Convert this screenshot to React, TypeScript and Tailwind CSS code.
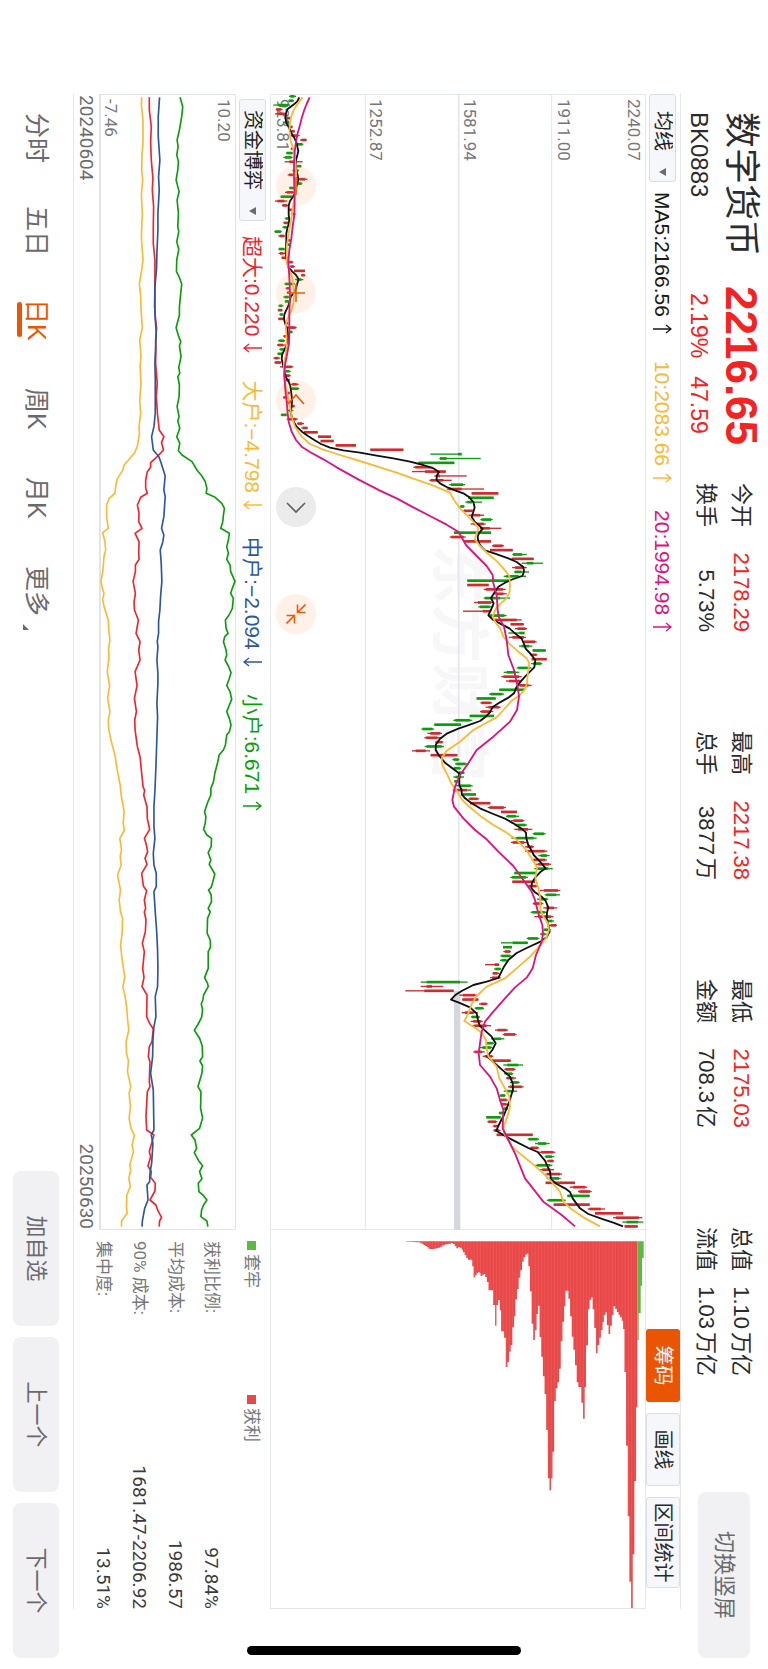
import React from "react";

/* ------------------------------------------------------------------ */
/* Chart data                                                          */
/* ------------------------------------------------------------------ */

type Segment = { t: number; v: number; pts: string };

const MAIN_W = 3408;
const MAIN_H = 1128;
const FLOW_W = 3408;
const FLOW_H = 411;

// Candles as "colour low high", one per trading day; v is the price offset of the block.
const CANDLES: { v: number; rows: string }[] = [
  {
    v: -30,
    rows:
      "G87 108,G85 102,G40 90,R47 68,R45 78,R78 92,G70 92,R90 98,R92 105,R92 119,R120 141,G108 130,R92 100,G78 100,G70 98,R74 128,G108 125,G97 117,R83 103,R107 142," +
      "G108 127,G87 105,R75 102,G62 97,R45 82,R66 84,R86 97,G92 107,G74 90,R70 87,G67 84,G43 65,R55 75,R78 93,G80 92,G55 75,R56 75,R64 84,R78 100,R90 105," +
      "R102 135,R123 136,G105 130,G73 105,R77 90,R80 95,G70 88,G74 88,G55 70,R53 68,G58 70,R54 75,R75 85,R82 110,G86 99,R70 85,G54 75,R51 75,G58 75,G52 68," +
      "R40 60,R43 65,R60 100,G76 92,R70 92,R76 90,R92 116,G93 118,R80 90,R69 85,R80 95,R92 105,G84 100,G62 82,R80 113,R111 132,R124 144,R132 173,R174 213,R182 221," +
      "R227 288,R331 430",
  },
  {
    v: 330,
    rows:
      "G151 245,G178 302,G115 223,R100 158,R96 198,R163 260,R148 215,G208 255,R200 312,R275 355,G265 341,G256 306,G238 254,R248 282,R265 312,G301 338,R272 317,R300 364,G222 333,R209 257," +
      "R253 333,R336 372,R330 398,G397 440,R395 461,G425 489,R396 440,G402 447,G371 438,G262 390,R262 326,R311 377,R340 380,G311 390,R282 340,G295 340,R249 330,G325 380,R340 425,R392 431," +
      "R405 441,G385 432,R387 438,R428 470,G417 457,G458 497,R450 472,R455 500,G453 487,G410 455,G371 418,R364 425,R378 425,R415 455,G358 435,G327 372,G290 347,R301 336,R317 362,R300 340," +
      "G269 342,G220 277,G163 243,G124 162,R142 186,R133 185,R165 190,G134 192,R96 150,R152 232,G217 238,G225 267,G217 243,G235 254,G220 252,G222 235,G228 278,R218 274,G243 288,R265 297," +
      "R270 331,R323 378,R363 411,G378 417,R393 433,G403 441,R403 457,G458 497,G394 470,R393 445,R435 462,R435 502,G475 509,R455 501,R465 513,G463 518,G403 470,G391 444,R397 465,R443 473," +
      "R480 541,G494 540,G471 505,R458 490,R490 532,G452 500,R463 520,G500 522,R507 531,G490 512,G480 500,G440 478,G363 444,G369 396,R370 393,G361 395,G360 385,R315 358,G342 364,R337 358," +
      "R330 362,G122 263,R122 190,R76 221,R238 291,R247 295,R297 323,G284 312,R245 293,G273 300,R272 308,R277 333,R345 384,R368 410,G333 373,G317 342,G300 337,R280 314,R308 340,R335 392," +
      "G370 429,R373 407,G372 400,R378 408,G390 419,R384 431,G371 411,G359 377,R357 383,R362 385,G368 384,G356 375,G319 362,R322 352,R338 357,R340 362,R350 458,G443 477,G465 509,R450 477," +
      "R473 526,G494 523,R500 522,G466 517,R478 522,R496 546,G500 542,R497 585,R569 622,R594 635,G562 629,G500 557,R521 629,R623 675,R645 729,R699 787,G727 790,R734 773",
  },
];

// Candles whose wicks are long compared with their bodies: index -> [body from, body to].
const BODIES: Record<number, [number, number]> = {
  2: [55, 85], 15: [88, 110], 19: [118, 135], 82: [234, 245], 83: [180, 200], 86: [135, 197], 87: [168, 180],
  88: [152, 190], 90: [205, 245], 93: [262, 276], 99: [300, 330], 105: [399, 426], 107: [440, 460],
  109: [405, 425], 110: [378, 415], 115: [315, 360], 118: [308, 329], 120: [343, 410], 123: [418, 434],
  194: [398, 443], 199: [344, 357], 203: [140, 240], 204: [140, 156], 205: [133, 221],
};

const FULL_BODY = new Set([
  84, 91, 92, 100, 102, 104, 106, 111, 112, 121, 127, 129, 136, 138, 142, 144, 151, 160, 162, 164, 178, 180, 195,
  207, 221, 234, 238, 249, 252, 254, 256, 259, 78, 79, 80, 81, 77, 23, 40,
]);

const MA5: Segment[] = [
  {
    t: -42,
    v: -30,
    pts: "118,52 112,64 103,72 92,80 82,88 78,100 76,115 80,130 86,141 92,153 97,165 104,175 109,187 112,200 115,213 112,226 108,240 107,255 109,272 113,285 115,298 112,312 108,325 106,338 98,352 90,363 86,377 86,404 88,418 86,432 82,445 79,460 79,480 78,500 77,520 79,535 82,548 85,562 97,575 108,585 116,598 112,610 108,625 101,640 92,650 89,665 84,680 78,692 73,704 72,718 76,732 81,743 83,757 85,770 83,782 79,796 74,808 67,822 65,836 68,850 71,862 74,878 78,892 86,905 91,918 93,932 95,948 96,965 95,980 92,995 95,1010 101,1025 110,1040 126,1055 144,1068 163,1080 183,1092 210,1103 250,1111 300,1118 350,1127 400,1135 450,1145 490,1155 520,1165",
  },
  {
    t: 1008,
    v: 330,
    pts: "177,126 170,138 170,150 180,160 200,171 225,181 250,190 268,202 280,216 284,232 280,246 275,260 284,275 298,287 308,297 298,308 293,320 295,335 302,348 315,361 345,371 385,385 410,396 430,411 432,425 427,438 400,447 375,458 355,470 342,490 333,504 341,520 334,537 325,556 340,570 365,583 388,595 405,610 425,626 432,642 437,656 452,672 466,690 463,712 450,725 435,740 420,757 409,772 402,790 385,803 360,817 337,832 330,847 315,862 300,873 270,884 235,896 200,911 180,926 168,943 167,960 178,978 197,1000 220,1017 237,1030 238,1050 238,1066 245,1080 245,1092 255,1105",
  },
  {
    t: 2118,
    v: 330,
    pts: "275,10 300,25 340,42 375,56 400,70 425,86 438,98 439,115 444,133 455,152 461,165 480,185 497,205 480,217 466,232 456,248 454,264 463,275 485,290 497,303 505,322 501,338 500,355 505,375 509,395 500,412 483,424 440,444 410,459 385,480 372,500 363,518 355,534 320,545 280,555 245,573 225,586 213,599 235,607 270,622 290,640 294,660 299,677 315,692 335,710 347,730 337,750 321,770 340,786 365,808 390,830 398,850 399,868 394,885 388,905 380,925 372,945 364,960 355,978 349,992 370,1005 400,1021 445,1044 473,1056 495,1082 503,1100 510,1115 513,1138 530,1152 555,1165 570,1176 578,1195 600,1225 625,1242 670,1258 700,1268 729,1279",
  },
];

const MA10: Segment[] = [
  {
    t: -42,
    v: -30,
    pts: "128,52 118,65 107,80 99,95 93,112 90,130 88,150 90,170 94,190 99,205 104,225 106,245 108,270 109,300 108,330 106,345 102,365 98,385 96,405 92,425 88,450 84,475 80,500 80,530 81,550 88,570 96,590 100,615 102,640 101,665 95,690 87,708 80,722 77,740 79,760 80,785 79,805 76,830 72,850 72,880 74,905 79,930 85,955 90,980 95,1010 105,1040 125,1070 150,1092 190,1109 240,1125 290,1140",
  },
  {
    t: 1008,
    v: 330,
    pts: "0,112 50,128 100,146 160,167 210,188 222,210 240,235 262,257 285,280 295,295 288,315 285,328 300,348 325,372 352,395 370,415 388,438 390,465 389,485 380,505 362,520 348,535 338,560 345,575 360,595 370,620 387,640 415,665 440,685 448,700 444,725 441,760 435,778 420,795 395,812 370,840 350,862 320,878 280,900 240,935 200,962 185,985 187,1005 200,1030 215,1062 230,1082",
  },
  {
    t: 2118,
    v: 330,
    pts: "247,0 265,18 300,47 340,75 380,98 410,120 437,148 455,175 471,203 466,235 474,260 480,290 482,330 490,350 503,368 507,390 500,412 478,440 450,470 410,505 375,535 320,560 290,588 275,612 265,640 253,663 285,683 305,698 318,720 320,745 325,770 350,800 358,835 375,865 388,890 390,920 382,950 371,980 372,1000 400,1045 450,1085 490,1120 510,1140 540,1175 550,1205 575,1228 610,1252 660,1279",
  },
];

const MA20: Segment[] = [
  {
    t: -42,
    v: -30,
    pts: "149,52 140,72 132,92 125,115 120,135 113,160 108,185 104,215 102,250 102,290 103,330 104,370 103,405 98,440 94,475 88,510 85,545 87,575 89,610 90,650 88,700 88,760 87,790 80,830 75,855 73,885 76,930 80,965 83,1000 86,1025 95,1055 108,1080 125,1100 150,1116 190,1138 230,1162 296,1199",
  },
  {
    t: 1008,
    v: 330,
    pts: "0,182 50,205 100,232 150,258 200,284 235,305 258,345 290,378 320,408 338,435 340,460 350,495 353,540 356,560 372,590 380,630 385,675 402,720 413,770 417,800 411,840 390,875 340,920 290,960 265,1000 240,1035 225,1070",
  },
  {
    t: 2118,
    v: 330,
    pts: "217,0 222,20 250,55 285,90 320,118 355,155 400,198 430,240 455,275 465,300 475,340 487,375 489,400 485,425 468,465 458,505 440,533 405,562 375,595 340,635 315,665 305,695 300,730 296,760 300,795 330,830 350,865 360,900 370,930 368,985 385,1020 405,1060 435,1135 490,1205 545,1245 585,1279",
  },
];

const FLOW_SMALL: Segment[] = [
  {
    t: -42,
    v: -297,
    pts: "539,52 547,80 544,110 537,150 530,180 533,200 529,225 534,245 532,270 527,300 536,335 530,360 534,400 532,440 535,455 529,485 535,508 529,540 528,575 536,590 544,612 541,640 537,680 537,705 527,743 535,770 541,785 537,797 542,830 535,862 538,880 532,890 537,915 536,950 530,980 536,1010 532,1022 538,1045 529,1070 538,1090 534,1112 545,1125 575,1145 590,1170 605,1188 615,1205 620,1225 618,1240 645,1252 665,1270 673,1285 670,1305 668,1325 662,1345 688,1360 685,1380 680,1400 685,1420 680,1438 690,1455 692,1475",
  },
  {
    t: 1398,
    v: -87,
    pts: "495,64 488,82 482,100 490,115 487,145 477,165 466,180 468,205 474,220 464,230 460,245 468,270 470,285 465,300 475,318 483,338 477,358 470,377 480,395 485,418 478,435 470,455 478,475 483,495 478,515 470,525 466,555 460,570 447,585 442,610 434,640 430,665 422,685 422,705 412,728 403,755 407,770 405,790 400,808 410,825 424,835 423,860 414,878 422,900 417,913 427,930 434,942 428,965 423,982 415,990 423,1005 424,1025 414,1045",
  },
  {
    t: 2388,
    v: -87,
    pts: "420,66 412,85 411,130 420,150 421,172 414,185 414,235 403,263 412,280 414,290 400,315 398,330 393,342 397,358 394,382 382,405 372,421 388,445 396,468 397,500 389,513 397,528 395,550 389,570 383,590 392,605 391,655 397,684 388,715 363,735 374,750 379,775 372,788 385,812 397,827 388,845 395,866 384,880 386,905 400,917 410,930 400,945 394,960 392,980 410,993 413,1010",
  },
];

const FLOW_LARGE: Segment[] = [
  {
    t: -42,
    v: -297,
    pts: "423,52 422,75 427,120 427,185 424,225 423,270 426,300 422,345 425,400 422,470 424,500 427,540 423,570 416,612 420,650 421,690 425,743 417,780 421,830 418,860 421,910 417,960 420,1000 415,1040 416,1060 411,1095 402,1118 385,1138 370,1155 365,1172 350,1195 345,1215 342,1240 325,1255 317,1275 317,1310 322,1345 305,1358 312,1385 314,1410 309,1430 306,1470",
  },
  {
    t: 1398,
    v: -87,
    pts: "90,64 94,85 99,100 95,118 100,142 112,180 114,215 117,240 113,265 114,295 109,335 116,377 110,415 117,455 112,480 113,505 120,540 132,585 140,635 148,675 151,705 160,755 157,790 161,810 147,835 152,870 148,890 151,915 140,945 145,970 149,990 145,1020",
  },
  {
    t: 2388,
    v: -87,
    pts: "149,66 155,85 154,130 149,165 154,210 162,262 156,290 163,320 168,355 170,385 174,420 166,455 167,490 173,513 170,545 180,590 175,610 179,650 175,685 181,715 191,737 184,765 188,785 177,825 180,840 174,865 179,890 168,915 167,950 169,970 152,993 152,1010",
  },
];

const FLOW_HUGE: Segment[] = [
  {
    t: -42,
    v: -297,
    pts: "446,52 446,90 452,140 450,185 452,240 457,295 455,330 459,380 458,440 458,490 463,540 463,600 462,680 465,720 468,745 465,780 466,800 465,850 470,910 467,950 471,1005 476,1050 490,1070 483,1088 489,1110 470,1130 450,1148 450,1162 440,1175 435,1200 435,1225 440,1240 420,1252 410,1275 415,1300 414,1325 424,1345 403,1360 415,1385 414,1415 415,1438 404,1455 404,1475",
  },
  {
    t: 1398,
    v: -87,
    pts: "187,64 194,100 190,125 191,150 203,180 196,220 208,245 204,270 208,300 193,335 199,377 191,415 197,455 192,480 193,510 200,560 208,590 212,630 217,680 222,692 219,705 229,740 230,775 237,808 221,835 226,850 231,875 223,895 229,913 213,940 218,978 228,992 221,1020 225,1045",
  },
  {
    t: 2388,
    v: -87,
    pts: "221,66 226,90 224,125 215,160 221,185 216,235 220,262 214,290 229,315 228,380 237,400 248,417 244,455 236,470 233,500 238,515 236,575 238,590 230,605 226,680 228,720 250,735 240,770 236,785 240,800 232,828 242,845 240,862 254,880 253,903 238,930 256,945 262,962 273,982 267,993 266,1010",
  },
];

const FLOW_MEDIUM: Segment[] = [
  {
    t: -42,
    v: -297,
    pts: "477,52 473,110 473,170 478,240 474,290 476,330 472,400 472,450 469,520 468,565 463,620 463,700 467,760 465,800 463,850 464,900 464,1000 460,1040 453,1070 458,1110 475,1130 482,1150 494,1188 490,1230 494,1250 490,1310 483,1345 490,1365 487,1385 479,1410 482,1450",
  },
  {
    t: 1398,
    v: -87,
    pts: "274,64 270,110 268,150 264,185 264,220 260,245 262,260 259,300 262,340 262,370 259,430 261,470 258,560 256,620 253,692 250,740 250,800 253,835 248,880 250,915 257,940 257,980 250,995 253,1040",
  },
  {
    t: 2388,
    v: -87,
    pts: "254,66 258,120 261,180 262,235 261,290 254,320 256,380 250,410 247,450 246,500 240,550 248,600 250,720 242,735 247,760 243,820 238,850 237,875 229,885 232,930 222,955 215,993 214,1010",
  },
];

// Chip distribution as "price,amount" steps; each amount holds until the next price.
const CHIPS =
  "78,1 95,2 105,3 118,4 124,7 130,11 135,14 140,18 145,22 150,23 162,22 168,21 174,19 180,16 187,12 195,9 205,7 213,5 219,8 224,14 229,21 234,17 240,19 245,25 249,33 254,42 259,50 264,55 275,55 277,75 281,108 286,101 290,95 295,92 299,95 302,104 307,100 312,98 316,107 321,122 326,147 340,191 346,253 350,191 355,176 360,207 364,270 373,289 378,377 383,362 388,331 393,311 398,258 403,225 407,174 412,143 417,109 422,87 427,61 432,48 437,40 441,37 446,75 451,150 456,247 461,296 466,267 471,218 475,193 480,287 485,346 490,405 495,458 500,566 505,711 510,747 515,711 519,631 524,479 529,441 534,423 539,382 544,300 549,241 554,195 558,148 567,172 572,225 577,286 582,325 587,372 592,423 597,437 606,484 611,532 616,437 620,312 626,204 631,175 636,168 640,204 645,260 650,335 655,311 660,289 665,266 670,243 674,221 679,213 683,251 688,278 693,253 698,221 703,195 708,202 713,212 718,220 723,228 728,238 732,263 736,392 741,613 746,825 751,1021 756,1100 761,939 766,719 771,498 775,498";
const CHIPS_HELD = "775,297 779,215 785,133 789,50 794,50";

const linePoints = (segments: Segment[], height: number) =>
  segments
    .flatMap(({ t, v, pts }) =>
      pts.split(" ").map((pair) => {
        const [value, time] = pair.split(",").map(Number);
        return `${time + t},${height - (value + v)}`;
      }),
    )
    .join(" ");

const stepPath = (steps: string) => {
  const points = steps.split(" ").map((pair) => pair.split(",").map(Number));
  const y = (price: number) => MAIN_H - (price + 330);
  let d = `M34 ${y(points[0][0])}`;
  points.forEach(([price, amount], i) => {
    const next = points[i + 1] ? points[i + 1][0] : price;
    d += `L${34 + amount} ${y(price)}L${34 + amount} ${y(next)}`;
  });
  return `${d}L34 ${y(points[points.length - 1][0])}Z`;
};

const candles = CANDLES.flatMap(({ v, rows }) =>
  rows.split(",").map((row) => {
    const [low, high] = row.slice(1).split(" ").map(Number);
    return { up: row[0] === "R", low, high, v };
  }),
).map((c, i) => {
  const span = c.high - c.low;
  const trimLow = FULL_BODY.has(i) ? 0 : span * (i % 2 ? 0.1 : 0.2);
  const trimHigh = FULL_BODY.has(i) ? 0 : span * (i % 3 ? 0.12 : 0.24);
  const [from, to] = BODIES[i] ?? [c.low + trimLow, c.high - trimHigh];
  return { up: c.up, x: 7 + i * 13.09, low: c.low + c.v, high: c.high + c.v, from: from + c.v, to: to + c.v };
});

/* ------------------------------------------------------------------ */
/* Pieces                                                              */
/* ------------------------------------------------------------------ */

type Stat = { label: string; value: string; unit?: string; red?: boolean };

const STATS: Stat[][] = [
  [{ label: "今开", value: "2178.29", red: true }, { label: "换手", value: "5.73%" }],
  [{ label: "最高", value: "2217.38", red: true }, { label: "总手", value: "3877", unit: "万" }],
  [{ label: "最低", value: "2175.03", red: true }, { label: "金额", value: "708.3", unit: "亿" }],
  [{ label: "总值", value: "1.10", unit: "万亿" }, { label: "流值", value: "1.03", unit: "万亿" }],
];

function Header() {
  return (
    <header className="flex h-[87px] shrink-0 pl-[112px] pr-[11px] text-[#2b2b2d]">
      <div className="w-[174px] pt-[3px]">
        <h1 className="flex h-12 items-center text-[36px] leading-none">数字货币</h1>
        <p className="flex h-9 items-center text-[24px] leading-none">BK0883</p>
      </div>
      <div className="w-[197px] pt-[3px] text-[#f52222]">
        <p className="flex h-12 items-center text-[44px] font-bold leading-none">2216.65</p>
        <p className="flex h-9 items-center gap-[18px] pl-[7px] text-[23px] leading-none">
          <span>2.19%</span>
          <span>47.59</span>
        </p>
      </div>
      <div className="flex gap-[99px] pt-[9px]">
        {STATS.map((column) => (
          <dl key={column[0].label} className="w-[149px]">
            {column.map(({ label, value, unit, red }) => (
              <div key={label} className="flex h-[35px] items-center justify-between text-[22px] leading-none">
                <dt>{label}</dt>
                <dd className={red ? "text-[#f52222]" : "text-[#2b2b2d]"}>
                  {value}
                  {unit && <span className="ml-[3px]">{unit}</span>}
                </dd>
              </div>
            ))}
          </dl>
        ))}
      </div>
      <button
        type="button"
        className="ml-auto mt-[18px] h-[52px] w-[166px] rounded-lg bg-[#f1f1f4] text-[22px] leading-none text-[#6a6a6e]"
      >
        切换竖屏
      </button>
    </header>
  );
}

function Picker({ label, name, padding }: { label: string; name: string; padding: string }) {
  return (
    <label
      className={`flex h-[27px] items-center gap-[17px] rounded-[3px] border border-[#dcdee6] bg-[#f6f7fb] ${padding}`}
    >
      <select
        aria-label={name}
        className="h-full appearance-none bg-transparent text-[20px] leading-none text-[#1f1f21] outline-none"
      >
        <option>{label}</option>
      </select>
      <svg viewBox="0 0 8 7" className="h-[7px] w-2" aria-hidden="true">
        <path d="M0 0H8L4 7Z" fill="#6b6b6f" />
      </svg>
    </label>
  );
}

function Reading({ text, rising, tone }: { text: string; rising: boolean; tone: string }) {
  return (
    <p className={`flex items-center gap-[7px] text-[21px] leading-none ${tone}`}>
      {text}
      <svg
        viewBox="0 0 10 19"
        className="h-[19px] w-[10px]"
        fill="none"
        stroke="currentColor"
        strokeWidth="1.3"
        role="img"
        aria-label={rising ? "上升" : "下降"}
      >
        <path d={rising ? "M5 19V1M1 6L5 1L9 6" : "M5 0V18M1 13L5 18L9 13"} />
      </svg>
    </p>
  );
}

const CONTROLS = [
  { name: "缩小", d: "M1 10H19", disabled: false },
  { name: "放大", d: "M1 10H19M10 1V19", disabled: false },
  { name: "左移", d: "M14 2L5 10L14 18", disabled: false },
  { name: "右移", d: "M6 1L15 10L6 19", disabled: true },
  { name: "收起", d: "M0.5 0.5L8 8M8.5 0.5V8.5H0.5M19.5 19.5L12 12M11.5 19.5V11.5H19.5", disabled: false },
];

const PRICE_LABELS = [
  { text: "2240.07", place: "top-[3px]" },
  { text: "1911.00", place: "top-[73px]" },
  { text: "1581.94", place: "top-[167px]" },
  { text: "1252.87", place: "top-[261px]" },
  { text: "923.81", place: "top-[354px]" },
];

function CandleChart() {
  return (
    <div className="relative min-h-0 flex-1 border border-[#e6e7ec]">
      <span
        aria-hidden="true"
        className="absolute left-[450px] top-[158px] text-[59px] font-bold leading-none text-[#f7f7f7]"
      >
        东方财富
      </span>
      {PRICE_LABELS.map(({ text, place }) => (
        <span key={text} className={`absolute left-1 font-[Roboto] text-[17px] leading-none text-[#77777b] ${place}`}>
          {text}
        </span>
      ))}
      <svg
        viewBox={`0 0 ${MAIN_W} ${MAIN_H}`}
        preserveAspectRatio="none"
        className="absolute -left-px -top-px h-[calc(100%+2px)] w-[calc(100%+2px)]"
        role="img"
        aria-label="日K"
      >
        <g stroke="#e3e6ee">
          <path d={`M0 842H${MAIN_W}M0 283H${MAIN_W}`} strokeWidth="3" />
          <path d={`M0 562H${MAIN_W}`} strokeWidth="5" />
        </g>
        <rect x="2691" y="557" width="717" height="19" fill="#d5d7dd" />
        {candles.map((c) => (
          <g key={c.x} fill={c.up ? "#d02b2b" : "#0a9f0a"}>
            <rect x={c.x - 2} y={MAIN_H - c.high} width="4" height={c.high - c.low} />
            <rect x={c.x - 4} y={MAIN_H - c.to} width="8" height={c.to - c.from} />
          </g>
        ))}
        <g fill="none" strokeWidth="5.5" strokeLinejoin="round">
          <polyline points={linePoints(MA5, MAIN_H)} stroke="#111111" />
          <polyline points={linePoints(MA10, MAIN_H)} stroke="#fdb933" />
          <polyline points={linePoints(MA20, MAIN_H)} stroke="#e0127f" />
        </g>
      </svg>
      <div className="absolute bottom-[5px] left-[71px] flex gap-[67px]">
        {CONTROLS.map(({ name, d, disabled }) => (
          <button
            key={name}
            type="button"
            aria-label={name}
            disabled={disabled}
            className="flex size-10 items-center justify-center rounded-full bg-[#fb6a1a]/10 text-[#ee5a0a] disabled:bg-black/8 disabled:text-[#5c5c5c]"
          >
            <svg viewBox="0 0 20 20" className="size-5" fill="none" stroke="currentColor" aria-hidden="true">
              <path d={d} strokeWidth="1.6" />
            </svg>
          </button>
        ))}
      </div>
    </div>
  );
}

function FlowChart() {
  return (
    <div className="relative h-[137px] shrink-0 border border-b-2 border-[#e2e3e9]">
      <span className="absolute left-1 top-[3px] font-[Roboto] text-[17px] leading-none text-[#77777b]">10.20</span>
      <span className="absolute bottom-px left-1 font-[Roboto] text-[17px] leading-none text-[#77777b]">-7.46</span>
      <svg
        viewBox={`0 0 ${FLOW_W} ${FLOW_H}`}
        preserveAspectRatio="none"
        className="absolute -left-px -top-px h-[calc(100%+2px)] w-[calc(100%+2px)]"
        role="img"
        aria-label="资金博弈"
      >
        <g fill="none" strokeWidth="5" strokeLinejoin="round">
          <polyline points={linePoints(FLOW_LARGE, FLOW_H)} stroke="#fdb933" />
          <polyline points={linePoints(FLOW_HUGE, FLOW_H)} stroke="#f5232b" />
          <polyline points={linePoints(FLOW_MEDIUM, FLOW_H)} stroke="#2b579f" />
          <polyline points={linePoints(FLOW_SMALL, FLOW_H)} stroke="#0a9f0a" />
        </g>
      </svg>
    </div>
  );
}

function ChipChart() {
  return (
    <div className="min-h-0 flex-1 border border-l-0 border-[#e6e7ec]">
      <svg
        viewBox={`0 0 1134 ${MAIN_H}`}
        preserveAspectRatio="none"
        className="block h-full w-full"
        role="img"
        aria-label="筹码"
      >
        <defs>
          <pattern id="stripes" width="10" height="9.7" patternUnits="userSpaceOnUse">
            <rect width="10" height="9.7" fill="#e84848" />
            <rect width="10" height="3" fill="#ee5656" />
          </pattern>
        </defs>
        <path d={stepPath(CHIPS)} fill="url(#stripes)" />
        <path d={stepPath(CHIPS_HELD)} fill="#5bb944" />
      </svg>
    </div>
  );
}

const AVERAGES = [
  { text: "10:2083.66", tone: "text-[#fdb933]" },
  { text: "20:1994.98", tone: "text-[#e0127f]" },
];

const FLOWS = [
  { text: "大户:−4.798", rising: false, tone: "text-[#fdb933]" },
  { text: "中户:−2.094", rising: false, tone: "text-[#2b579f]" },
  { text: "小户:6.671", rising: true, tone: "text-[#0a9f0a]" },
];

const COSTS = [
  ["获利比例:", "97.84%"],
  ["平均成本:", "1986.57"],
  ["90% 成本:", "1681.47-2206.92"],
  ["集中度:", "13.51%"],
];

const TABS = ["分时", "五日", "日K", "周K", "月K", "更多"];

export default function App() {
  return (
    <div className="h-screen w-screen overflow-hidden bg-white">
      <div className="flex h-[100vw] w-[100vh] origin-top-left translate-x-[100vw] rotate-90 flex-col bg-white font-['Liberation_Sans','Noto_Sans_CJK_SC',sans-serif]">
        <Header />

        <main className="ml-[94px] mr-[60px] flex min-h-0 flex-1 border-y border-[#e6e7ec]">
          <section className="flex min-w-0 flex-1 flex-col">
            <div className="flex h-[34px] shrink-0 items-center gap-[27px]">
              <div className="flex items-center gap-[10px]">
                <Picker label="均线" name="主图指标" padding="pl-4 pr-[5px]" />
                <Reading text="MA5:2166.56" rising tone="text-[#1a1a1a]" />
              </div>
              {AVERAGES.map(({ text, tone }) => (
                <Reading key={text} text={text} rising tone={tone} />
              ))}
            </div>
            <CandleChart />
            <div className="flex h-[34px] shrink-0 items-center gap-[27px] pl-[5px]">
              <div className="flex items-center gap-[15px]">
                <Picker label="资金博弈" name="副图指标" padding="pl-[10px] pr-[5px]" />
                <Reading text="超大:0.220" rising={false} tone="text-[#f5232b]" />
              </div>
              {FLOWS.map(({ text, rising, tone }) => (
                <Reading key={text} text={text} rising={rising} tone={tone} />
              ))}
            </div>
            <FlowChart />
            <div className="flex h-[25px] shrink-0 items-center justify-between px-px font-[Roboto] text-[19px] leading-none text-[#6b6b6f]">
              <time>20240604</time>
              <time>20250630</time>
            </div>
          </section>

          <aside className="flex w-[379px] shrink-0 flex-col">
            <div className="flex h-[34px] shrink-0 justify-end gap-[11px] pr-[21px] text-[20px] leading-none text-[#2b2b2d]">
              <button type="button" className="w-[73px] rounded-[3px] bg-[#ea5504] text-white">
                筹码
              </button>
              <button type="button" className="w-[73px] rounded-[3px] border border-[#dcdee6] bg-[#f6f7fb]">
                画线
              </button>
              <button type="button" className="w-[91px] rounded-[3px] border border-[#dcdee6] bg-[#f6f7fb]">
                区间统计
              </button>
            </div>
            <ChipChart />
            <div className="h-[196px] shrink-0 pl-[11px] text-[17px] leading-none text-[#77777b]">
              <ul className="mb-1 grid h-9 grid-cols-[154px_1fr] items-center">
                <li className="flex items-center gap-1">
                  <i className="size-[9px] bg-[#5bb944]" />
                  套牢
                </li>
                <li className="flex items-center gap-1">
                  <i className="size-[9px] bg-[#e84848]" />
                  获利
                </li>
              </ul>
              <dl>
                {COSTS.map(([label, value]) => (
                  <div
                    key={label}
                    className="flex h-9 items-center justify-between font-[Roboto,'Noto_Sans_CJK_SC',sans-serif]"
                  >
                    <dt>{label}</dt>
                    <dd className="text-[19px] text-[#3b3b3d]">{value}</dd>
                  </div>
                ))}
              </dl>
            </div>
          </aside>
        </main>

        <footer className="flex h-[73px] shrink-0 items-center justify-between pl-[113px] pr-[11px]">
          <nav className="flex gap-[43px] text-[25px] leading-none text-[#6a6a6e]">
            {TABS.map((tab) => (
              <a
                key={tab}
                href="#"
                aria-current={tab === "日K" ? "page" : undefined}
                className="relative flex h-[50px] min-w-[46px] items-center aria-[current]:text-[#ea5504]"
              >
                {tab}
                {tab === "日K" && (
                  <span className="absolute bottom-[6px] left-[3px] h-[5px] w-[35px] rounded-full bg-[#ea5504]" />
                )}
                {tab === "更多" && (
                  <svg viewBox="0 0 6 6" className="absolute -right-[14px] bottom-3 size-[6px]" aria-hidden="true">
                    <path d="M6 0V6H0Z" fill="#6a6a6e" />
                  </svg>
                )}
              </a>
            ))}
          </nav>
          <div className="flex gap-[11px]">
            {["加自选", "上一个", "下一个"].map((action) => (
              <button
                key={action}
                type="button"
                className="h-[46px] w-[155px] rounded-lg bg-[#f1f1f4] text-[22px] leading-none text-[#6a6a6e]"
              >
                {action}
              </button>
            ))}
          </div>
        </footer>

        <div className="absolute inset-y-0 right-[14px] my-auto h-[274px] w-[9px] rounded-full bg-black" />
      </div>
    </div>
  );
}
